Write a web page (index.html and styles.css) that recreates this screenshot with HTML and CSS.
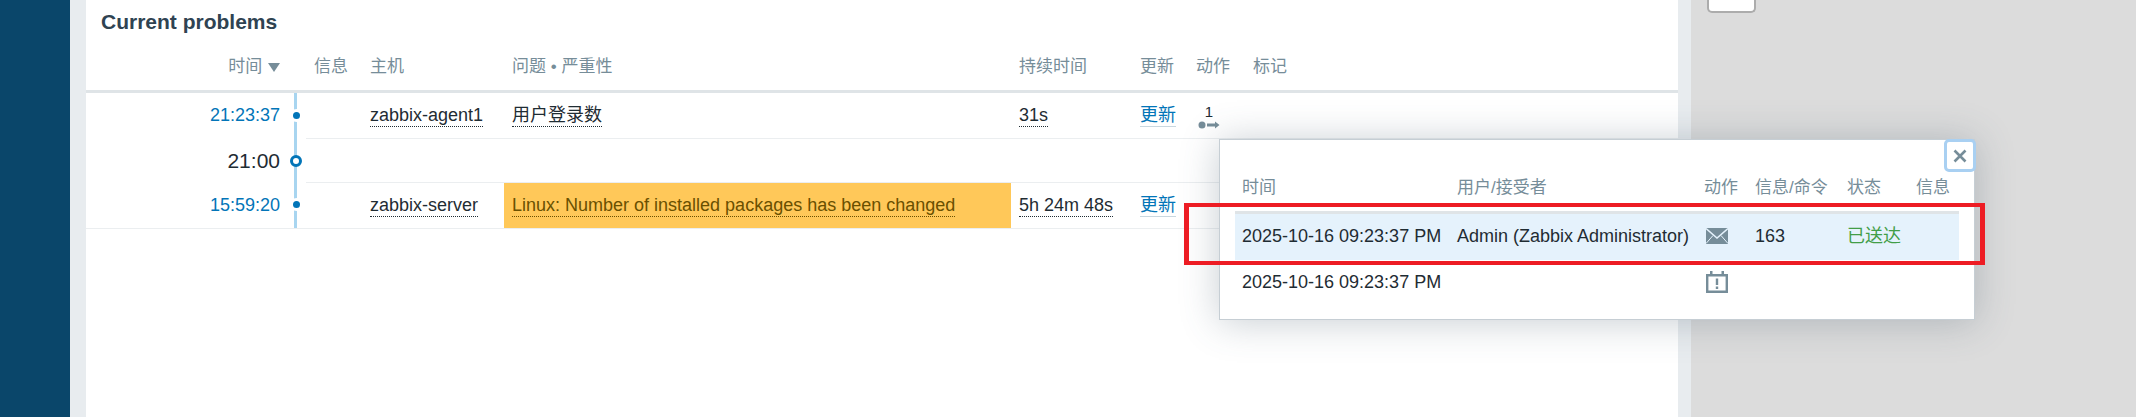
FILE: index.html
```html
<!DOCTYPE html>
<html>
<head>
  <meta charset="utf-8">
  <link rel="stylesheet" href="styles.css">
</head>
<body>
  <div class="page">
    <div class="sidebar"></div>
    <div class="gutter"></div>
    <div class="panel">
      <h3 class="panel-title">Current problems</h3>
      <table class="problems">
        <colgroup>
          <col class="c-time"><col class="c-line"><col class="c-info"><col class="c-host">
          <col class="c-problem"><col class="c-duration"><col class="c-update"><col class="c-action"><col>
        </colgroup>
        <thead>
          <tr>
            <th class="time">时间 <span class="sort"></span></th>
            <th class="line-head"></th>
            <th>信息</th>
            <th>主机</th>
            <th>问题 • 严重性</th>
            <th>持续时间</th>
            <th>更新</th>
            <th>动作</th>
            <th>标记</th>
          </tr>
        </thead>
        <tbody>
          <tr class="row-tall">
            <td class="time"><a class="link">21:23:37</a></td>
            <td class="line"><span class="dot"></span></td>
            <td class="sep"></td>
            <td class="sep"><span class="dotted">zabbix-agent1</span></td>
            <td class="sep"><span class="dotted">用户登录数</span></td>
            <td class="sep"><span class="dotted">31s</span></td>
            <td class="sep"><a class="link under">更新</a></td>
            <td class="sep">
              <div class="action-count">
                <span class="count">1</span>
                <svg class="arrow" width="22" height="8" viewBox="0 0 22 8">
                  <circle cx="4" cy="4" r="3.5" fill="#768d99"/>
                  <path d="M9 2.500h8V0.500L21.500 4 17 7.500V5.500H9z" fill="#768d99"/>
                </svg>
              </div>
            </td>
            <td class="sep"></td>
          </tr>
          <tr class="row-short">
            <td class="time hour">21:00</td>
            <td class="line"><span class="ring"></span></td>
            <td class="sep" colspan="7"></td>
          </tr>
          <tr class="row-tall last">
            <td class="time"><a class="link">15:59:20</a></td>
            <td class="line"><span class="dot"></span></td>
            <td></td>
            <td><span class="dotted">zabbix-server</span></td>
            <td class="warn"><span class="dotted">Linux: Number of installed packages has been changed</span></td>
            <td><span class="dotted">5h 24m 48s</span></td>
            <td><a class="link under">更新</a></td>
            <td></td>
            <td></td>
          </tr>
        </tbody>
      </table>
    </div>
    <div class="gutter"></div>
    <div class="backdrop">
      <div class="corner-box"></div>
    </div>
  </div>

  <div class="popup">
    <button class="close">
      <svg width="14" height="14" viewBox="0 0 14 14"><path d="M1.500 1.500l11 11M12.500 1.500l-11 11" stroke="#768d99" stroke-width="2.600" fill="none"/></svg>
    </button>
    <table class="actions">
      <colgroup>
        <col class="a-time"><col class="a-user"><col class="a-action"><col class="a-msg"><col class="a-status"><col>
      </colgroup>
      <thead>
        <tr>
          <th>时间</th>
          <th>用户/接受者</th>
          <th>动作</th>
          <th>信息/命令</th>
          <th>状态</th>
          <th>信息</th>
        </tr>
      </thead>
      <tbody>
        <tr class="selected">
          <td>2025-10-16 09:23:37 PM</td>
          <td>Admin (Zabbix Administrator)</td>
          <td>
            <svg class="icon" width="22" height="16" viewBox="0 0 22 16">
              <rect width="22" height="16" fill="#768d99"/>
              <path d="M0 0.500l11 9.500 11-9.500" stroke="#e5f2fc" stroke-width="1.500" fill="none"/>
              <path d="M0 15.500l7-8M22 15.500l-7-8" stroke="#e5f2fc" stroke-width="1" fill="none"/>
            </svg>
          </td>
          <td>163</td>
          <td class="ok">已送达</td>
          <td></td>
        </tr>
        <tr>
          <td>2025-10-16 09:23:37 PM</td>
          <td></td>
          <td>
            <svg class="icon" width="22" height="22" viewBox="0 0 22 22">
              <path d="M1.200 4.200h19.600v16.600H1.200z" fill="none" stroke="#768d99" stroke-width="2.400"/>
              <path d="M4 0h2.500v5H4zM15.500 0H18v5h-2.500z" fill="#768d99"/>
              <path d="M9.800 7.500h2.400v6.500H9.800zM9.800 15.500h2.400v2.500H9.800z" fill="#768d99"/>
            </svg>
          </td>
          <td></td>
          <td></td>
          <td></td>
        </tr>
      </tbody>
    </table>
  </div>

  <div class="callout"></div>
</body>
</html>
```

FILE: styles.css
```css
html, body {
  margin: 0;
  padding: 0;
  height: 100%;
  overflow: hidden;
}

body {
  font-family: "Liberation Sans", "Noto Sans CJK SC", sans-serif;
  font-size: 18px;
  line-height: 20px;
  color: #1f2c33;
  background: #dcdcdc;
}

.page {
  display: flex;
  height: 417px;
}

.sidebar {
  width: 70px;
  background: #0a466a;
}

.gutter {
  width: 16px;
  background: #e8ecef;
}

.panel {
  width: 1592px;
  background: #fff;
}

.gutter + .panel + .gutter {
  width: 13px;
}

.backdrop {
  flex: 1;
  background: #dcdcdc;
  padding-left: 16px;
}

.corner-box {
  width: 49px;
  height: 13px;
  box-sizing: border-box;
  background: #fff;
  border: 2px solid #acacac;
  border-top: 0;
  border-radius: 0 0 5px 5px;
}

.panel-title {
  margin: 0;
  height: 43px;
  line-height: 44px;
  padding-left: 15px;
  font-size: 21px;
  font-weight: bold;
  color: #2f4352;
}

table {
  border-collapse: separate;
  border-spacing: 0;
  table-layout: fixed;
}

th, td {
  box-sizing: border-box;
  padding: 0 0 0 8px;
  text-align: left;
  font-weight: normal;
}

th {
  color: #768d99;
  font-size: 17px;
}

.problems {
  width: 1592px;
}

.problems th {
  height: 50px;
  border-bottom: 3px solid #dfe4e7;
}

.problems .row-tall td {
  padding-bottom: 2px;
}

.c-time { width: 200px; }
.c-line { width: 20px; }
.c-info { width: 56px; }
.c-host { width: 142px; }
.c-problem { width: 507px; }
.c-duration { width: 121px; }
.c-update { width: 56px; }
.c-action { width: 57px; }

.problems .time {
  text-align: right;
  padding-left: 0;
  padding-right: 6px;
}

.sort {
  display: inline-block;
  border-left: 6px solid transparent;
  border-right: 6px solid transparent;
  border-top: 9px solid #768d99;
  margin-left: 1px;
}

.row-tall td { height: 46px; }
.row-short td { height: 44px; }

.sep {
  border-bottom: 1px solid #ebeef0;
}

.last td {
  border-bottom: 1px solid #ebeef0;
}

.line {
  padding: 0;
  text-align: center;
  background: linear-gradient(#a8d5f0, #a8d5f0) no-repeat 8px 0 / 3px 100%;
}

.dot {
  display: block;
  width: 7px;
  height: 7px;
  margin: 0 auto;
  border-radius: 50%;
  background: #0275b8;
  box-shadow: 0 0 0 3px #fff;
}

.ring {
  display: block;
  width: 12px;
  height: 12px;
  box-sizing: border-box;
  margin: 0 auto;
  border: 3px solid #0275b8;
  border-radius: 50%;
  background: #fff;
}

.problems .hour {
  font-size: 21px;
}

.link {
  color: #0275b8;
}

.under {
  padding-bottom: 1px;
  border-bottom: 1px solid #c9d7df;
}

.dotted {
  padding-bottom: 1px;
  border-bottom: 1px dotted #1f2c33;
}

.warn {
  background: #ffc859;
  color: #6a5000;
}

.warn .dotted {
  border-bottom-color: #6a5000;
}

.action-count {
  display: inline-flex;
  flex-direction: column;
  align-items: center;
  width: 24px;
  margin-left: 1px;
}

.count {
  font-size: 15px;
  line-height: 16px;
}

.arrow {
  display: block;
  margin-top: 1px;
}

.popup {
  position: absolute;
  left: 1219px;
  top: 139px;
  width: 756px;
  height: 181px;
  box-sizing: border-box;
  padding: 25px 0 0 15px;
  background: #fff;
  border: 1px solid #c6ced4;
  box-shadow: 0 2px 36px rgba(70, 90, 105, 0.3);
}

.close {
  position: absolute;
  right: -2px;
  top: -1px;
  width: 32px;
  height: 33px;
  padding: 0;
  display: flex;
  align-items: center;
  justify-content: center;
  background: #fff;
  border: 3px solid #a9d0f2;
  border-radius: 5px;
}

.actions {
  width: 724px;
}

.actions th, .actions td {
  padding-left: 7px;
}

.actions th {
  height: 49px;
  border-bottom: 3px solid #dfe4e7;
}

.actions td {
  height: 46px;
  padding-bottom: 2px;
}

.a-time { width: 215px; }
.a-user { width: 247px; }
.a-action { width: 51px; }
.a-msg { width: 92px; }
.a-status { width: 69px; }

.selected td {
  background: #e5f2fc;
}

.icon {
  display: block;
  margin-left: 2px;
}

.ok {
  color: #429e47;
}

.callout {
  position: absolute;
  left: 1184px;
  top: 203px;
  width: 801px;
  height: 62px;
  box-sizing: border-box;
  border: 4px solid #ed1c24;
  border-left-width: 5px;
  border-right-width: 5px;
}
```
